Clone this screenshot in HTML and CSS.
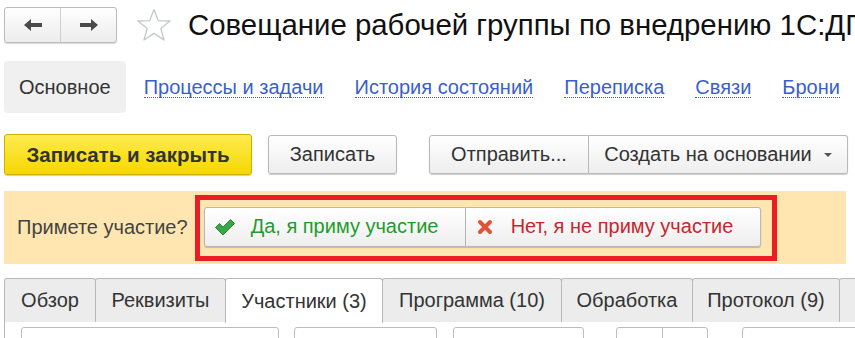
FILE: index.html
```html
<!DOCTYPE html>
<html lang="ru">
<head>
    <meta charset="UTF-8">
    <title>Совещание</title>
    <link rel="stylesheet" href="styles.css">
</head>
<body>
<div class="page">
    <div class="head">
        <div class="nav">
            <div class="nav-btn">
                <svg width="20" height="14" viewBox="0 0 20 14"><path d="M1 7 L8 1 L8 5 L19 5 L19 9 L8 9 L8 13 Z" fill="#4a4a4a"/></svg>
            </div>
            <div class="nav-btn">
                <svg width="20" height="14" viewBox="0 0 20 14"><path d="M19 7 L12 1 L12 5 L1 5 L1 9 L12 9 L12 13 Z" fill="#4a4a4a"/></svg>
            </div>
        </div>
        <svg class="star" width="36" height="34" viewBox="0 0 36 34"><path d="M18 1.5 L22.2 12.6 L34 13 L24.8 20.4 L28 32 L18 25.4 L8 32 L11.2 20.4 L2 13 L13.8 12.6 Z" fill="none" stroke="#c4c8cc" stroke-width="1.3" stroke-linejoin="round"/></svg>
        <h1 class="title">Совещание рабочей группы по внедрению 1С:ДГ</h1>
    </div>

    <div class="sections">
        <span class="section active">Основное</span>
        <a class="section link" href="#">Процессы и задачи</a>
        <a class="section link" href="#">История состояний</a>
        <a class="section link" href="#">Переписка</a>
        <a class="section link" href="#">Связи</a>
        <a class="section link" href="#">Брони</a>
    </div>

    <div class="commands">
        <button class="btn btn-main">Записать и закрыть</button>
        <button class="btn btn-save">Записать</button>
        <div class="btn-group">
            <button class="btn btn-send">Отправить...</button>
            <button class="btn btn-create">Создать на основании <span class="caret"></span></button>
        </div>
    </div>

    <div class="ask">
        <span class="ask-label">Примете участие?</span>
        <div class="ask-frame">
            <button class="btn btn-yes">
                <svg width="22" height="18" viewBox="0 0 22 18"><path d="M1.5 9.5 L5.5 5.5 L9 9 L16.5 1.5 L20.5 5.5 L9 17 Z" fill="#3aa745" stroke="#2b8a36" stroke-width="1" stroke-linejoin="round"/></svg>
                Да, я приму участие
            </button>
            <button class="btn btn-no">
                <svg width="16" height="16" viewBox="0 0 16 16"><path d="M3 3 L13 13 M13 3 L3 13" stroke="#e0533a" stroke-width="4" stroke-linecap="round"/></svg>
                Нет, я не приму участие
            </button>
        </div>
    </div>

    <div class="tabs">
        <div class="tab">Обзор</div>
        <div class="tab">Реквизиты</div>
        <div class="tab current">Участники (3)</div>
        <div class="tab">Программа (10)</div>
        <div class="tab">Обработка</div>
        <div class="tab">Протокол (9)</div>
        <div class="tab tab-rest"></div>
    </div>
    <div class="tab-body">
        <div class="field f1"></div>
        <div class="field f2"></div>
        <div class="field f3"></div>
        <div class="field f4"><span></span><span></span></div>
        <div class="field f5"></div>
    </div>
</div>
</body>
</html>
```

FILE: styles.css
```css
*{
    margin: 0;
    padding: 0;
    box-sizing: border-box;
}
body{
    background: #fff;
    font-family: "Liberation Sans", Arial, sans-serif;
    color: #333;
    overflow: hidden;
}
.page{
    width: 855px;
    height: 338px;
    padding-left: 4px;
    overflow: hidden;
}
.head{
    display: flex;
    align-items: center;
    height: 50px;
}
.nav{
    display: flex;
    flex-shrink: 0;
    width: 113px;
    height: 36px;
    border: 1px solid #bcbcbc;
    border-radius: 3px;
    background: linear-gradient(#ffffff, #ececec);
    box-shadow: 0 1px 1px rgba(0,0,0,0.15);
}
.nav-btn{
    flex: 1;
    display: flex;
    align-items: center;
    justify-content: center;
}
.nav-btn + .nav-btn{
    border-left: 1px solid #d0d0d0;
}
.star{
    flex-shrink: 0;
    margin-left: 19px;
}
.title{
    margin-left: 16px;
    font-size: 29.4px;
    font-weight: normal;
    color: #111;
    white-space: nowrap;
}
.sections{
    display: flex;
    align-items: center;
    margin-top: 11px;
    height: 52px;
}
.section{
    font-size: 20px;
    white-space: nowrap;
}
.active{
    display: flex;
    align-items: center;
    height: 52px;
    padding: 0 15px;
    background: #f0f0f0;
    border-radius: 4px;
    color: #333;
    margin-right: 18px;
}
.link{
    color: #3a5fcd;
    text-decoration: none;
    border-bottom: 1px dotted #3a5fcd;
    line-height: 20px;
    margin-right: 31px;
}
.commands{
    display: flex;
    align-items: center;
    margin-top: 21px;
    height: 41px;
}
.btn{
    font-family: "Liberation Sans", Arial, sans-serif;
    font-size: 20px;
    color: #333;
    border: 1px solid #b8b8b8;
    border-radius: 3px;
    background: linear-gradient(#ffffff, #eeeeee);
    box-shadow: 0 1px 1px rgba(0,0,0,0.2);
    height: 39px;
    padding: 0 10px;
    white-space: nowrap;
}
.btn-main{
    width: 248px;
    height: 41px;
    background: linear-gradient(#ffeb4f, #f6d700);
    border-color: #cfb000;
    font-weight: bold;
    font-size: 20.5px;
    color: #333;
}
.btn-save{
    width: 129px;
    margin-left: 16px;
}
.btn-group{
    display: flex;
    margin-left: 32px;
    border-radius: 3px;
    box-shadow: 0 1px 1px rgba(0,0,0,0.2);
}
.btn-group .btn{
    box-shadow: none;
}
.btn-send{
    width: 160px;
    border-radius: 3px 0 0 3px;
}
.btn-create{
    width: 259px;
    border-left: none;
    border-radius: 0 3px 3px 0;
    display: flex;
    align-items: center;
    justify-content: center;
}
.caret{
    display: inline-block;
    margin-left: 12px;
    border-left: 4px solid transparent;
    border-right: 4px solid transparent;
    border-top: 4px solid #555;
}
.ask{
    display: flex;
    align-items: center;
    width: 842px;
    height: 73px;
    margin-top: 16px;
    background: #ffe6b0;
}
.ask-label{
    font-size: 20px;
    color: #444;
    margin-left: 13px;
    margin-right: 7px;
    white-space: nowrap;
}
.ask-frame{
    display: flex;
    flex-shrink: 0;
    width: 582px;
    height: 66px;
    border: 5px solid #ec1c24;
    padding: 7px 0 0 4px;
}
.ask-frame .btn{
    height: 40px;
    display: flex;
    align-items: center;
    gap: 15px;
}
.btn-yes{
    width: 262px;
    color: #1f9b2e;
    border-radius: 3px 0 0 3px;
    padding-left: 9px;
}
.btn-no{
    width: 295px;
    color: #c8262c;
    border-left: none;
    border-radius: 0 3px 3px 0;
    padding-left: 11px;
    gap: 18px !important;
}
.tabs{
    display: flex;
    margin-top: 14px;
    height: 44px;
    border-bottom: 1px solid #b8b8b8;
}
.tab{
    display: flex;
    flex-shrink: 0;
    align-items: center;
    justify-content: center;
    font-size: 20px;
    color: #333;
    background: #ececec;
    border: 1px solid #b8b8b8;
    border-bottom: none;
    border-radius: 3px 3px 0 0;
    margin-right: -1px;
    height: 44px;
    white-space: nowrap;
}
.tab:nth-child(1){ width: 92px; }
.tab:nth-child(2){ width: 131px; }
.tab:nth-child(3){ width: 158px; }
.tab:nth-child(4){ width: 180px; }
.tab:nth-child(5){ width: 132px; }
.tab:nth-child(6){ width: 148px; }
.tab-rest{ width: 30px; }
.current{
    background: #fff;
    height: 45px;
    margin-bottom: -1px;
}
.tab-body{
    display: flex;
    border-left: 1px solid #b8b8b8;
    height: 20px;
    padding: 5px 0 0 16px;
}
.field{
    flex-shrink: 0;
    height: 30px;
    border: 1px solid #bdbdbd;
    border-radius: 3px;
}
.f1{ width: 258px; }
.f2{ width: 143px; margin-left: 15px; }
.f3{ width: 131px; margin-left: 16px; }
.f4{ width: 92px; margin-left: 32px; display: flex; }
.f4 span{ flex: 1; }
.f4 span + span{ border-left: 1px solid #bdbdbd; }
.f5{ width: 120px; margin-left: 34px; }
```
